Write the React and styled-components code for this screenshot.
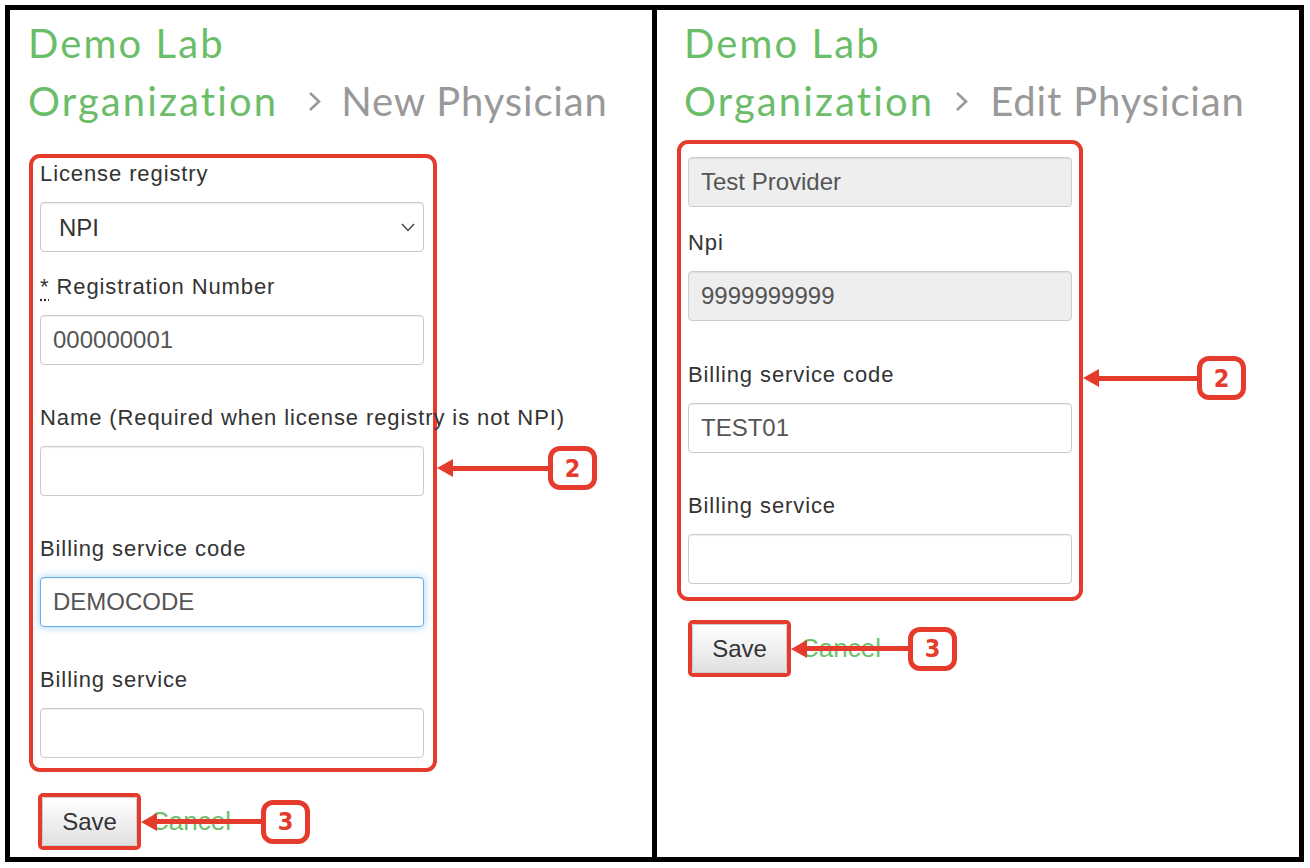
import React from 'react';
import styled, { createGlobalStyle } from 'styled-components';

const RED = '#e53b2c';
const GREEN = '#6cbd69';

const GlobalStyle = createGlobalStyle`
  html, body {
    margin: 0;
    padding: 0;
    background: #fff;
  }
  body {
    font-family: "Liberation Sans", Arial, sans-serif;
  }
  * {
    box-sizing: border-box;
  }
`;

const Frame = styled.div`
  margin: 5px;
  width: 1299px;
  height: 857px;
  border: 5px solid #000;
  background: #000;
  display: grid;
  grid-template-columns: 642px 642px;
  column-gap: 5px;
`;

const Panel = styled.section`
  background: #fff;
  padding: 4px 0 0 ${(p) => p.$inset}px;
  display: flex;
  flex-direction: column;
  align-items: flex-start;
`;

const Heading = styled.h1`
  margin: 0 0 0 ${(p) => p.$shift}px;
  display: flex;
  align-items: flex-end;
  font-family: Lato, "Open Sans", sans-serif;
  font-weight: 400;
  font-size: 40px;
  line-height: 58px;
`;

const OrgLink = styled.a`
  width: min-content;
  color: ${GREEN};
  letter-spacing: 2.1px;
  text-decoration: none;
`;

const Chevron = styled.span`
  height: 58px;
  display: flex;
  align-items: center;
  margin: 0 ${(p) => p.$after}px 0 ${(p) => p.$before}px;
`;

const Title = styled.span`
  color: #999;
  letter-spacing: 0.85px;
  white-space: nowrap;
`;

const Highlight = styled.div`
  position: relative;
  width: ${(p) => p.$w}px;
  margin-top: ${(p) => p.$top}px;
  border: 4px solid ${RED};
  border-radius: 11px;
  padding: ${(p) => p.$pad};
`;

const Field = styled.div`
  margin-bottom: ${(p) => p.$after || 0}px;
`;

const Label = styled.label`
  display: block;
  font-size: 22px;
  line-height: 26px;
  letter-spacing: 0.9px;
  white-space: nowrap;
  color: #333;
  margin-bottom: 15px;

  abbr {
    text-decoration: underline dotted;
    text-underline-offset: 5px;
    cursor: help;
  }
`;

const TextInput = styled.input`
  display: block;
  width: 100%;
  height: 50px;
  padding: 0 12px;
  font-family: "Liberation Sans", Arial, sans-serif;
  font-size: 24px;
  color: #555;
  background: ${(p) => (p.disabled ? '#eee' : '#fff')};
  border: 1px solid ${(p) => (p.$focus ? '#66afe9' : '#ccc')};
  border-radius: 4px;
  box-shadow: inset 0 1px 1px rgba(0, 0, 0, 0.075)
    ${(p) => (p.$focus ? ', 0 0 8px rgba(102, 175, 233, 0.6)' : '')};
  outline: none;
  -webkit-text-fill-color: #555;
  opacity: 1;
`;

const SelectWrap = styled.div`
  position: relative;
`;

const Select = styled.select`
  display: block;
  width: 100%;
  height: 50px;
  padding: 0 18px;
  appearance: none;
  font-family: "Liberation Sans", Arial, sans-serif;
  font-size: 24px;
  color: #333;
  background: #fff;
  border: 1px solid #ccc;
  border-radius: 4px;
  box-shadow: inset 0 1px 1px rgba(0, 0, 0, 0.075);
  outline: none;
`;

const Caret = styled.svg`
  position: absolute;
  right: 9px;
  top: 21px;
  pointer-events: none;
`;

const Actions = styled.div`
  display: flex;
  align-items: center;
  margin: ${(p) => p.$top}px 0 0 ${(p) => p.$left}px;
`;

const SaveMark = styled.div`
  position: relative;
  border: 4px solid ${RED};
  border-radius: 5px;
`;

const Button = styled.button`
  display: block;
  width: 95px;
  height: 49px;
  padding: 0;
  font-family: "Liberation Sans", Arial, sans-serif;
  font-size: 24px;
  color: #333;
  background: linear-gradient(to bottom, #fff 0%, #e0e0e0 100%);
  border: 1px solid #ccc;
  border-radius: 3px;
`;

const CancelLink = styled.a`
  margin-left: 9px;
  font-size: 26px;
  color: #6cc16c;
  text-decoration: none;
`;

const Callout = styled.div`
  position: absolute;
  left: calc(100% + 4px);
  top: ${(p) => p.$y};
  transform: translateY(-50%);
  display: flex;
  align-items: center;
  z-index: 2;
`;

const Shaft = styled.div`
  width: ${(p) => p.$len}px;
  height: 5px;
  background: ${RED};
`;

const Badge = styled.div`
  width: 49px;
  height: 44px;
  display: flex;
  align-items: center;
  justify-content: center;
  background: #fff;
  border: 5px solid ${RED};
  border-radius: 12px;
  color: ${RED};
  font-family: "DejaVu Sans Condensed", "DejaVu Sans", sans-serif;
  font-stretch: condensed;
  font-weight: 700;
  font-size: 25px;
`;

const Pointer = ({ len, y, n }) => (
  <Callout $y={y}>
    <svg width="16" height="18" viewBox="0 0 16 18">
      <polygon points="0,9 16,0 16,18" fill={RED} />
    </svg>
    <Shaft $len={len} />
    <Badge>{n}</Badge>
  </Callout>
);

const Crumbs = ({ title, shift, before, after }) => (
  <Heading $shift={shift}>
    <OrgLink href="#">Demo Lab Organization</OrgLink>
    <Chevron $before={before} $after={after}>
      <svg width="14" height="21" viewBox="0 0 14 21">
        <polyline points="2,2 11,10.5 2,19" fill="none" stroke="#999" strokeWidth="2.6" />
      </svg>
    </Chevron>
    <Title>{title}</Title>
  </Heading>
);

const NewPhysician = () => (
  <Panel $inset={19}>
    <Crumbs title="New Physician" shift={-1} before={30} after={19} />
    <Highlight $w={408} $top={24} $pad="3px 9px 10px 7px">
      <Field $after={22}>
        <Label>License registry</Label>
        <SelectWrap>
          <Select defaultValue="NPI">
            <option>NPI</option>
            <option>State license</option>
          </Select>
          <Caret width="14" height="9" viewBox="0 0 14 9">
            <polyline points="1,1 7,7.5 13,1" fill="none" stroke="#444" strokeWidth="1.4" />
          </Caret>
        </SelectWrap>
      </Field>
      <Field $after={40}>
        <Label>
          <abbr title="required">*</abbr> Registration Number
        </Label>
        <TextInput defaultValue="000000001" />
      </Field>
      <Field $after={40}>
        <Label>Name (Required when license registry is not NPI)</Label>
        <TextInput />
      </Field>
      <Field $after={40}>
        <Label>Billing service code</Label>
        <TextInput defaultValue="DEMOCODE" $focus />
      </Field>
      <Field>
        <Label>Billing service</Label>
        <TextInput />
      </Field>
      <Pointer len={95} y="310px" n="2" />
    </Highlight>
    <Actions $top={21} $left={9}>
      <SaveMark>
        <Button>Save</Button>
        <Pointer len={104} y="50%" n="3" />
      </SaveMark>
      <CancelLink href="#">Cancel</CancelLink>
    </Actions>
  </Panel>
);

const EditPhysician = () => (
  <Panel $inset={20}>
    <Crumbs title="Edit Physician" shift={7} before={21} after={21} />
    <Highlight $w={406} $top={10} $pad="13px 7px 13px 7px">
      <Field $after={23}>
        <TextInput defaultValue="Test Provider" disabled />
      </Field>
      <Field $after={41}>
        <Label>Npi</Label>
        <TextInput defaultValue="9999999999" disabled />
      </Field>
      <Field $after={40}>
        <Label>Billing service code</Label>
        <TextInput defaultValue="TEST01" />
      </Field>
      <Field>
        <Label>Billing service</Label>
        <TextInput />
      </Field>
      <Pointer len={98} y="234px" n="2" />
    </Highlight>
    <Actions $top={19} $left={11}>
      <SaveMark>
        <Button>Save</Button>
        <Pointer len={101} y="50%" n="3" />
      </SaveMark>
      <CancelLink href="#">Cancel</CancelLink>
    </Actions>
  </Panel>
);

export default function App() {
  return (
    <>
      <GlobalStyle />
      <Frame>
        <NewPhysician />
        <EditPhysician />
      </Frame>
    </>
  );
}
